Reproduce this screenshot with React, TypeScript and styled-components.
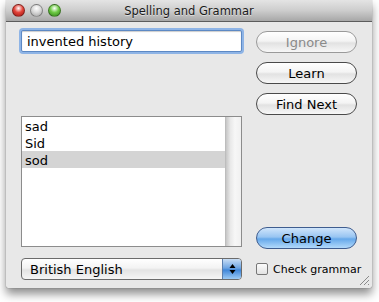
import React from "react";
import styled, { createGlobalStyle } from "styled-components";

const Global = createGlobalStyle`
  html, body { margin: 0; padding: 0; background: #ffffff; }
  body { font-family: "DejaVu Sans", "Liberation Sans", sans-serif; }
`;

const Page = styled.div`
  width: 379px;
  height: 302px;
  padding-left: 6px;
  box-sizing: border-box;
`;

const Window = styled.div`
  width: 366px;
  height: 288px;
  background: #e8e8e8;
  display: flex;
  flex-direction: column;
  box-shadow: 0 6px 10px rgba(0,0,0,0.45), 0 0 1px rgba(0,0,0,0.6);
  position: relative;
  border-radius: 0 0 2px 2px;
`;

const TitleBar = styled.div`
  height: 22px;
  flex: none;
  background: linear-gradient(#e4e4e4, #cdcdcd 50%, #a7a7a7);
  border-bottom: 1px solid #5c5c5c;
  box-sizing: border-box;
  display: flex;
  align-items: center;
  position: relative;
  padding-left: 6px;
  gap: 5px;
`;

const Light = styled.div<{ $c: string; $d: string }>`
  width: 13px;
  height: 13px;
  border-radius: 50%;
  background: radial-gradient(circle at 50% 30%, #ffffff 0%, ${(p) => p.$c} 45%, ${(p) => p.$d} 100%);
  border: 1px solid rgba(0,0,0,0.35);
  box-sizing: border-box;
`;

const Title = styled.div`
  position: absolute;
  left: 0;
  right: 0;
  top: 0;
  bottom: 0;
  display: flex;
  align-items: center;
  justify-content: center;
  font-size: 11.5px;
  color: #1a1a1a;
  padding-top: 1px;
  text-shadow: 0 1px 0 rgba(255,255,255,0.5);
`;

const Body = styled.div`
  flex: 1;
  display: flex;
  justify-content: space-between;
  padding: 0 15px 8px 15px;
`;

const LeftCol = styled.div`
  width: 221px;
  display: flex;
  flex-direction: column;
`;

const RightCol = styled.div`
  width: 101px;
  display: flex;
  flex-direction: column;
`;

const TextField = styled.div`
  margin-top: 8px;
  height: 22px;
  box-sizing: border-box;
  background: #fff;
  border: 1px solid #5d89c4;
  box-shadow: 0 0 0 2px #8eb4e6, inset 0 1px 1px rgba(0,0,0,0.2);
  border-radius: 2px;
  font-size: 13px;
  color: #000;
  padding-left: 5px;
  padding-top: 1px;
  display: flex;
  align-items: center;
`;

const List = styled.div`
  margin-top: 64px;
  height: 131px;
  box-sizing: border-box;
  border: 1px solid #8c8c8c;
  background: #fff;
  display: flex;
`;

const Rows = styled.div`
  flex: 1;
  display: flex;
  flex-direction: column;
`;

const Row = styled.div<{ $sel?: boolean }>`
  height: 17px;
  line-height: 19px;
  font-size: 13px;
  padding-left: 3px;
  background: ${(p) => (p.$sel ? "#d4d4d4" : "transparent")};
  color: #000;
`;

const ScrollTrack = styled.div`
  width: 15px;
  background: linear-gradient(90deg, #c6c6c6, #e9e9e9 30%, #f7f7f7 60%, #f0f0f0);
  border-left: 1px solid #bdbdbd;
`;

const Popup = styled.div`
  margin-top: 11px;
  height: 22px;
  box-sizing: border-box;
  border: 1px solid #6b6b6b;
  border-radius: 4px;
  background: linear-gradient(#ffffff, #f3f3f3 45%, #e3e3e3 55%, #f5f5f5);
  display: flex;
  align-items: center;
  overflow: hidden;
  font-size: 13px;
`;

const PopupLabel = styled.div`
  flex: 1;
  padding-left: 8px;
  color: #000;
`;

const PopupArrows = styled.div`
  width: 18px;
  height: 100%;
  background: linear-gradient(#c9def5, #6ea5e3 45%, #3f86d8 55%, #9ccaf5);
  border-left: 1px solid #5b7fae;
  display: flex;
  align-items: center;
  justify-content: center;
`;

const Button = styled.div<{ $blue?: boolean; $disabled?: boolean }>`
  height: 22px;
  box-sizing: border-box;
  border-radius: 11px;
  border: 1px solid ${(p) => (p.$disabled ? "#9a9a9a" : p.$blue ? "#3f5d8f" : "#4a4a4a")};
  background: ${(p) =>
    p.$blue
      ? "linear-gradient(#d0e5fb, #98c5f2 45%, #66a8ea 55%, #b2dafb)"
      : "linear-gradient(#ffffff, #f4f4f4 45%, #e2e2e2 55%, #f7f7f7)"};
  display: flex;
  align-items: center;
  justify-content: center;
  font-size: 13px;
  color: ${(p) => (p.$disabled ? "#8a8a8a" : "#000")};
  margin-top: 9px;
`;

const ChangeButton = styled(Button)`
  margin-top: auto;
`;

const CheckRow = styled.div`
  margin-top: 9px;
  height: 22px;
  display: flex;
  align-items: center;
  gap: 5px;
  font-size: 11px;
  color: #000;
  white-space: nowrap;
`;

const CheckBox = styled.div`
  width: 12px;
  height: 12px;
  flex: none;
  box-sizing: border-box;
  border: 1px solid #777;
  border-radius: 2px;
  background: linear-gradient(#fcfcfc, #e3e3e3);
`;

const Grip = styled.svg`
  position: absolute;
  right: 2px;
  bottom: 2px;
`;

export default function App() {
  return (
    <Page>
      <Global />
      <Window>
        <TitleBar>
          <Light $c="#e3443a" $d="#9c1410" />
          <Light $c="#d9d9d9" $d="#a0a0a0" />
          <Light $c="#6fcb45" $d="#2e7d16" />
          <Title>Spelling and Grammar</Title>
        </TitleBar>
        <Body>
          <LeftCol>
            <TextField>invented history</TextField>
            <List>
              <Rows>
                <Row>sad</Row>
                <Row>Sid</Row>
                <Row $sel>sod</Row>
              </Rows>
              <ScrollTrack />
            </List>
            <Popup>
              <PopupLabel>British English</PopupLabel>
              <PopupArrows>
                <svg width="7" height="12" viewBox="0 0 7 12">
                  <path d="M3.5 1 L6.5 5 L0.5 5 Z" fill="#000" />
                  <path d="M3.5 11 L6.5 7 L0.5 7 Z" fill="#000" />
                </svg>
              </PopupArrows>
            </Popup>
          </LeftCol>
          <RightCol>
            <Button $disabled>Ignore</Button>
            <Button>Learn</Button>
            <Button>Find Next</Button>
            <ChangeButton $blue>Change</ChangeButton>
            <CheckRow>
              <CheckBox />
              Check grammar
            </CheckRow>
          </RightCol>
        </Body>
        <Grip width="11" height="11" viewBox="0 0 11 11">
          <path d="M10 1 L1 10 M10 5 L5 10 M10 9 L9 10" stroke="#8a8a8a" strokeWidth="1" />
        </Grip>
      </Window>
    </Page>
  );
}
